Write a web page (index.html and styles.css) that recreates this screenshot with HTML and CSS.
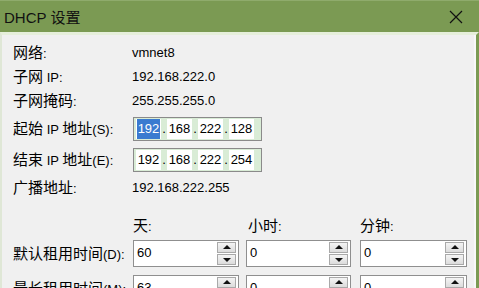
FILE: index.html
```html
<!DOCTYPE html>
<html>
<head>
<meta charset="utf-8">
<link rel="stylesheet" href="styles.css">
</head>
<body>
<div class="win">
  <div class="titlebar">
    <span class="title">DHCP <span class="c">设置</span></span>
    <svg class="close" width="14" height="14" viewBox="0 0 14 14"><path d="M1 1 L13 13 M13 1 L1 13" stroke="#111" stroke-width="1.2" fill="none"/></svg>
  </div>
  <div class="frame">
    <div class="content">
      <div class="row r1"><div class="lbl"><span class="c">网络</span>:</div><div class="val">vmnet8</div></div>
      <div class="row r2"><div class="lbl"><span class="c">子网</span> IP:</div><div class="val">192.168.222.0</div></div>
      <div class="row r3"><div class="lbl"><span class="c">子网掩码</span>:</div><div class="val">255.255.255.0</div></div>
      <div class="row r4"><div class="lbl"><span class="c">起始</span> IP <span class="c">地址</span>(S):</div>
        <div class="ip">
          <span class="seg"><span class="sel">192</span></span><span class="dot">.</span><span class="seg">168</span><span class="dot">.</span><span class="seg">222</span><span class="dot">.</span><span class="seg">128</span>
        </div>
      </div>
      <div class="row r5"><div class="lbl"><span class="c">结束</span> IP <span class="c">地址</span>(E):</div>
        <div class="ip">
          <span class="seg">192</span><span class="dot">.</span><span class="seg">168</span><span class="dot">.</span><span class="seg">222</span><span class="dot">.</span><span class="seg">254</span>
        </div>
      </div>
      <div class="row r6"><div class="lbl"><span class="c">广播地址</span>:</div><div class="val">192.168.222.255</div></div>
      <div class="row r7"><div class="lbl"></div>
        <div class="boxes heads">
          <div class="w1"><span class="c">天</span>:</div>
          <div class="w2"><span class="c">小时</span>:</div>
          <div class="w3"><span class="c">分钟</span>:</div>
        </div>
      </div>
      <div class="row r8"><div class="lbl"><span class="c">默认租用时间</span>(D):</div>
        <div class="boxes">
          <div class="spin w1"><span class="num">60</span><span class="btns"><span class="b up"></span><span class="b down"></span></span></div>
          <div class="spin w2"><span class="num">0</span><span class="btns"><span class="b up"></span><span class="b down"></span></span></div>
          <div class="spin w3"><span class="num">0</span><span class="btns"><span class="b up"></span><span class="b down"></span></span></div>
        </div>
      </div>
      <div class="row r9"><div class="lbl"><span class="c">最长租用时间</span>(M):</div>
        <div class="boxes">
          <div class="spin w1"><span class="num">63</span><span class="btns"><span class="b up"></span><span class="b down"></span></span></div>
          <div class="spin w2"><span class="num">0</span><span class="btns"><span class="b up"></span><span class="b down"></span></span></div>
          <div class="spin w3"><span class="num">0</span><span class="btns"><span class="b up"></span><span class="b down"></span></span></div>
        </div>
      </div>
    </div>
  </div>
</div>
</body>
</html>
```
FILE: styles.css
```css
html, body {
  margin: 0;
  padding: 0;
  overflow: hidden;
}
body {
  width: 479px;
  height: 288px;
  font-family: "Liberation Sans", "Noto Sans CJK SC", sans-serif;
  font-size: 13px;
  color: #000;
}
.c {
  font-family: "Noto Sans CJK SC", sans-serif;
  font-size: 15px;
}
.win {
  width: 479px;
  height: 288px;
  display: flex;
  flex-direction: column;
  background: #7b9a53;
}
.titlebar {
  height: 32px;
  flex: none;
  display: flex;
  align-items: center;
  justify-content: space-between;
  padding: 0 16px 0 4px;
  background: #7b9a53;
  border-top: 1px solid #8fab6c;
  box-sizing: border-box;
}
.title {
  font-size: 15px;
  color: #111;
  line-height: 20px;
  margin-top: 1px;
}
.close {
  display: block;
  margin-top: 1px;
}
.frame {
  flex: 1;
  border-top: 3px solid #e6efdb;
  border-left: 2px solid #dfe7d6;
  border-right: 3px solid #7b9a53;
  background: #f0f0f0;
  overflow: hidden;
}
.content {
  height: 100%;
  border-right: 2px solid #f8f8f8;
  padding-left: 11px;
  display: flex;
  flex-direction: column;
}
.row {
  display: flex;
  align-items: center;
  flex: none;
  line-height: 18px;
}
.lbl {
  width: 119px;
  flex: none;
  white-space: nowrap;
}
.val {
  white-space: nowrap;
}
.r1 { margin-top: 6px; height: 24px; }
.r2 { height: 23px; }
.r3 { height: 26px; }
.r4 { margin-top: 3px; height: 24px; }
.r5 { margin-top: 7px; height: 24px; }
.r6 { margin-top: 4px; height: 24px; }
.r7 { margin-top: 14px; height: 24px; }
.r8 { margin-top: 2px; height: 27px; }
.r9 { margin-top: 8px; height: 27px; }

.ip {
  margin-left: 1px;
  width: 129px;
  height: 24px;
  box-sizing: border-box;
  border: 1px solid #8a8a8a;
  background: #d9ecd6;
  display: flex;
  align-items: stretch;
  padding: 1px 3px 1px 2px;
}
.seg {
  width: 25px;
  background: #fff;
  display: flex;
  align-items: center;
  justify-content: center;
}
.dot {
  width: 6px;
  display: flex;
  align-items: center;
  justify-content: center;
}
.sel {
  background: #3a7bd0;
  color: #fff;
  display: flex;
  align-items: center;
  height: 100%;
  padding: 0 1px;
}

.boxes {
  margin-left: 1px;
  display: flex;
}
.w1 { width: 106px; }
.w2 { width: 105px; margin-left: 7px; }
.w3 { width: 107px; margin-left: 9px; }
.heads > div {
  white-space: nowrap;
  padding-left: 0;
}
.heads .w2 { padding-left: 2px; box-sizing: border-box; }

.spin {
  height: 27px;
  box-sizing: border-box;
  border: 1px solid #8f8f8f;
  background: #fff;
  display: flex;
  align-items: center;
  justify-content: space-between;
  padding: 1px 2px 1px 3px;
}
.spin.w2, .spin.w3 { }
.num {
  line-height: 16px;
  margin-top: -1px;
}
.btns {
  width: 19px;
  height: 23px;
  display: flex;
  flex-direction: column;
  gap: 1px;
}
.b {
  flex: 1;
  box-sizing: border-box;
  border: 1px solid #a9a9a9;
  background: linear-gradient(#f4f4f4, #dcdcdc);
  position: relative;
}
.b::after {
  content: "";
  position: absolute;
  left: 50%;
  top: 50%;
  margin-left: -4px;
  width: 0;
  height: 0;
  border-left: 4px solid transparent;
  border-right: 4px solid transparent;
}
.up::after {
  margin-top: -3px;
  border-bottom: 4px solid #111;
}
.down::after {
  margin-top: -2px;
  border-top: 4px solid #111;
}
```
